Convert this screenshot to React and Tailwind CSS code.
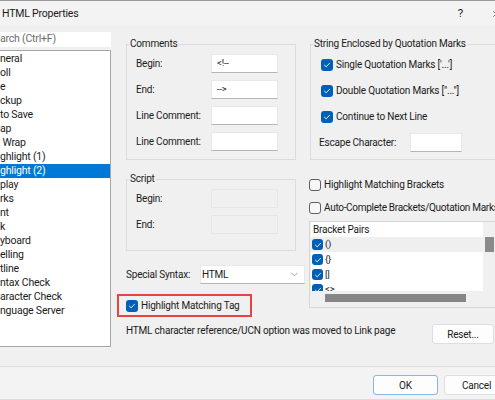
import React from 'react';
import { ChevronDown, X } from 'lucide-react';

const categories = [
	'neral',
	'oll',
	'e',
	'ckup',
	'to Save',
	'ap',
	' Wrap',
	'ghlight (1)',
	'ghlight (2)',
	'play',
	'rks',
	'nt',
	'k',
	'yboard',
	'elling',
	'tline',
	'ntax Check',
	'aracter Check',
	'nguage Server',
];

function Check({ checked = true, small = false }) {
	const size = small ? 'w-[11px] h-[11px]' : 'w-[12px] h-[12px]';
	if (!checked) {
		return (
			<span
				className={`${size} shrink-0 rounded-[3px] border border-[#5f5f5f] bg-[#f7f7f7]`}
			/>
		);
	}
	return (
		<span
			className={`${size} shrink-0 rounded-[3px] bg-[#005fb8] flex items-center justify-center`}>
			<svg viewBox="0 0 10 10" className="w-[8px] h-[8px]">
				<path
					d="M1.8 5.2 L4 7.3 L8.2 2.8"
					fill="none"
					stroke="white"
					strokeWidth="1.1"
					strokeLinecap="round"
					strokeLinejoin="round"
				/>
			</svg>
		</span>
	);
}

function Field({ value = '', disabled = false, width = 'w-[67px]' }) {
	return (
		<div
			className={`${width} h-[19px] shrink-0 flex items-center px-[5px] text-[9.5px] ${
				disabled
					? 'border border-[#e6e6e6] bg-[#f0f0f0]'
					: 'bg-white border border-[#e8e8e8] border-b-[#b5b5b5]'
			}`}>
			{value}
		</div>
	);
}

function FieldRow({ label, value, disabled }) {
	return (
		<div className="flex items-center h-[19px] pl-[9px]">
			<span className="w-[75px] shrink-0">{label}</span>
			<Field value={value} disabled={disabled} />
		</div>
	);
}

function Group({ title, className, children }) {
	return (
		<fieldset className={`border border-[#dcdcdc] ${className}`}>
			<legend className="ml-[2px] px-[1px] leading-[14px]">{title}</legend>
			{children}
		</fieldset>
	);
}

function CheckRow({ checked, children, className = '' }) {
	return (
		<div className={`flex items-center gap-[3px] ${className}`}>
			<Check checked={checked} />
			<span>{children}</span>
		</div>
	);
}

export default function App() {
	return (
		<div
			className="w-[495px] h-[400px] overflow-hidden bg-[#f0f0f0] text-[10px] tracking-[-0.2px] text-[#1b1b1b] whitespace-nowrap flex flex-col"
			style={{ fontFamily: 'Roboto, "Noto Sans", sans-serif' }}>
			{/* Title bar */}
			<div className="h-[26px] shrink-0 border-t border-[#9a9a9a] bg-[#f3f3f3] flex items-center">
				<span className="ml-[2px] text-[10.5px]">HTML Properties</span>
				<span className="ml-auto text-[11.5px]">?</span>
				<X className="w-[10px] h-[10px] ml-[28px] mr-[-6px] shrink-0" strokeWidth={1.4} />
			</div>

			<div className="flex flex-1 min-h-0">
				{/* Category sidebar */}
				<div className="w-[111px] shrink-0 flex flex-col text-[10.5px]">
					<div className="mt-[6px] h-[15px] bg-white text-[#6b6b6b] flex items-center leading-none">
						arch (Ctrl+F)
					</div>
					<div className="mt-[3px] h-[297px] bg-white border border-l-0 border-[#a7a7a7] pt-[1px]">
						{categories.map((c, i) => (
							<div
								key={i}
								className={`h-[14px] leading-[14px] whitespace-pre ${
									i === 8 ? 'bg-[#0078d7] text-white' : ''
								}`}>
								{c}
							</div>
						))}
					</div>
				</div>

				{/* Page */}
				<div className="flex-1 min-w-0 pl-[15px] flex flex-col">
					<div className="flex">
						{/* Left column */}
						<div className="w-[183px] shrink-0 flex flex-col">
							<Group title="Comments" className="w-[170px] mt-[11px] h-[123px]">
								<div className="flex flex-col gap-[7px] pt-[3px]">
									<FieldRow label="Begin:" value="<!--" />
									<FieldRow label="End:" value="-->" />
									<FieldRow label="Line Comment:" />
									<FieldRow label="Line Comment:" />
								</div>
							</Group>
							<Group title="Script" className="w-[170px] mt-[12px] h-[79px]">
								<div className="flex flex-col gap-[7px] pt-[3px]">
									<FieldRow label="Begin:" disabled />
									<FieldRow label="End:" disabled />
								</div>
							</Group>
							<div className="flex items-center mt-[14px] h-[19px]">
								<span className="w-[74px] shrink-0">Special Syntax:</span>
								<div className="w-[105px] shrink-0 h-[19px] bg-white border border-[#e8e8e8] border-b-[#b5b5b5] flex items-center pl-[1px] pr-[4px]">
									<span>HTML</span>
									<ChevronDown
										className="ml-auto w-[11px] h-[11px] text-[#6b6b6b]"
										strokeWidth={1.3}
									/>
								</div>
							</div>
							<div className="mt-[10px] -ml-[9px] w-[135px] h-[23px] border-2 border-[#e94444] flex items-center pl-[7px]">
								<CheckRow checked>Highlight Matching Tag</CheckRow>
							</div>
						</div>

						{/* Right column */}
						<div className="flex-1 flex flex-col">
							<Group
								title="String Enclosed by Quotation Marks"
								className="w-[200px] ml-[1px] mt-[11px] h-[123px]">
								<div className="flex flex-col pl-[10px] pt-[4px]">
									<CheckRow checked className="h-[19px]">
										Single Quotation Marks [&apos;...&apos;]
									</CheckRow>
									<CheckRow checked className="h-[19px] mt-[7px]">
										Double Quotation Marks [&quot;...&quot;]
									</CheckRow>
									<CheckRow checked className="h-[19px] mt-[7px]">
										Continue to Next Line
									</CheckRow>
									<div className="flex items-center h-[19px] mt-[7px] -ml-[2px]">
										<span className="w-[91px] shrink-0">Escape Character:</span>
										<Field width="w-[52px]" />
									</div>
								</div>
							</Group>
							<CheckRow checked={false} className="mt-[15px] h-[19px]">
								Highlight Matching Brackets
							</CheckRow>
							<CheckRow checked={false} className="mt-[4px] h-[19px]">
								<span className="tracking-[-0.3px]">Auto-Complete Brackets/Quotation Marks</span>
							</CheckRow>
							{/* Bracket pairs list */}
							<div className="mt-[4px] w-[200px] h-[87px] border border-[#d6d6d6] flex flex-col">
								<div className="flex">
									<div className="ml-[1px] w-[172px] h-[69px] bg-white overflow-hidden">
										<div className="h-[15px] leading-[15px] pl-[2px]">Bracket Pairs</div>
										{['()', '{}', '[]', '<>'].map((p, i) => (
											<div
												key={p}
												className={`h-[15px] flex items-center gap-[2px] pl-[1px] ${
													i === 0 ? 'bg-[#efefef]' : ''
												}`}>
												<Check small />
												<span className="text-[9.5px]">{p}</span>
											</div>
										))}
									</div>
									<div className="ml-[2px] pt-[15px]">
										<div className="w-[9px] h-[15px] bg-[#8a8a8a]" />
									</div>
								</div>
								<div className="ml-[15px] mt-[3px] w-[141px] h-[8px] bg-[#868686]" />
							</div>
						</div>
					</div>

					<div className="flex items-start mt-[5px]">
						<span className="mt-[1px]">
							HTML character reference/UCN option was moved to Link page
						</span>
						<button className="ml-auto w-[62px] h-[20px] mt-[2px] mr-[1px] shrink-0 bg-[#fdfdfd] border border-[#dedede] rounded-[3px]">
							Reset...
						</button>
					</div>
				</div>
			</div>

			{/* Footer */}
			<div className="h-[34px] shrink-0 border-t border-b border-[#dcdcdc] bg-[#f3f3f3] flex items-start pt-[8px] pl-[373px] gap-[6px]">
				<button className="w-[65px] h-[20px] shrink-0 bg-[#fdfdfd] border border-[#87b6e3] rounded-[3px]">
					OK
				</button>
				<button className="w-[65px] h-[20px] shrink-0 bg-[#fdfdfd] border border-[#dedede] rounded-[3px]">
					Cancel
				</button>
			</div>
		</div>
	);
}
